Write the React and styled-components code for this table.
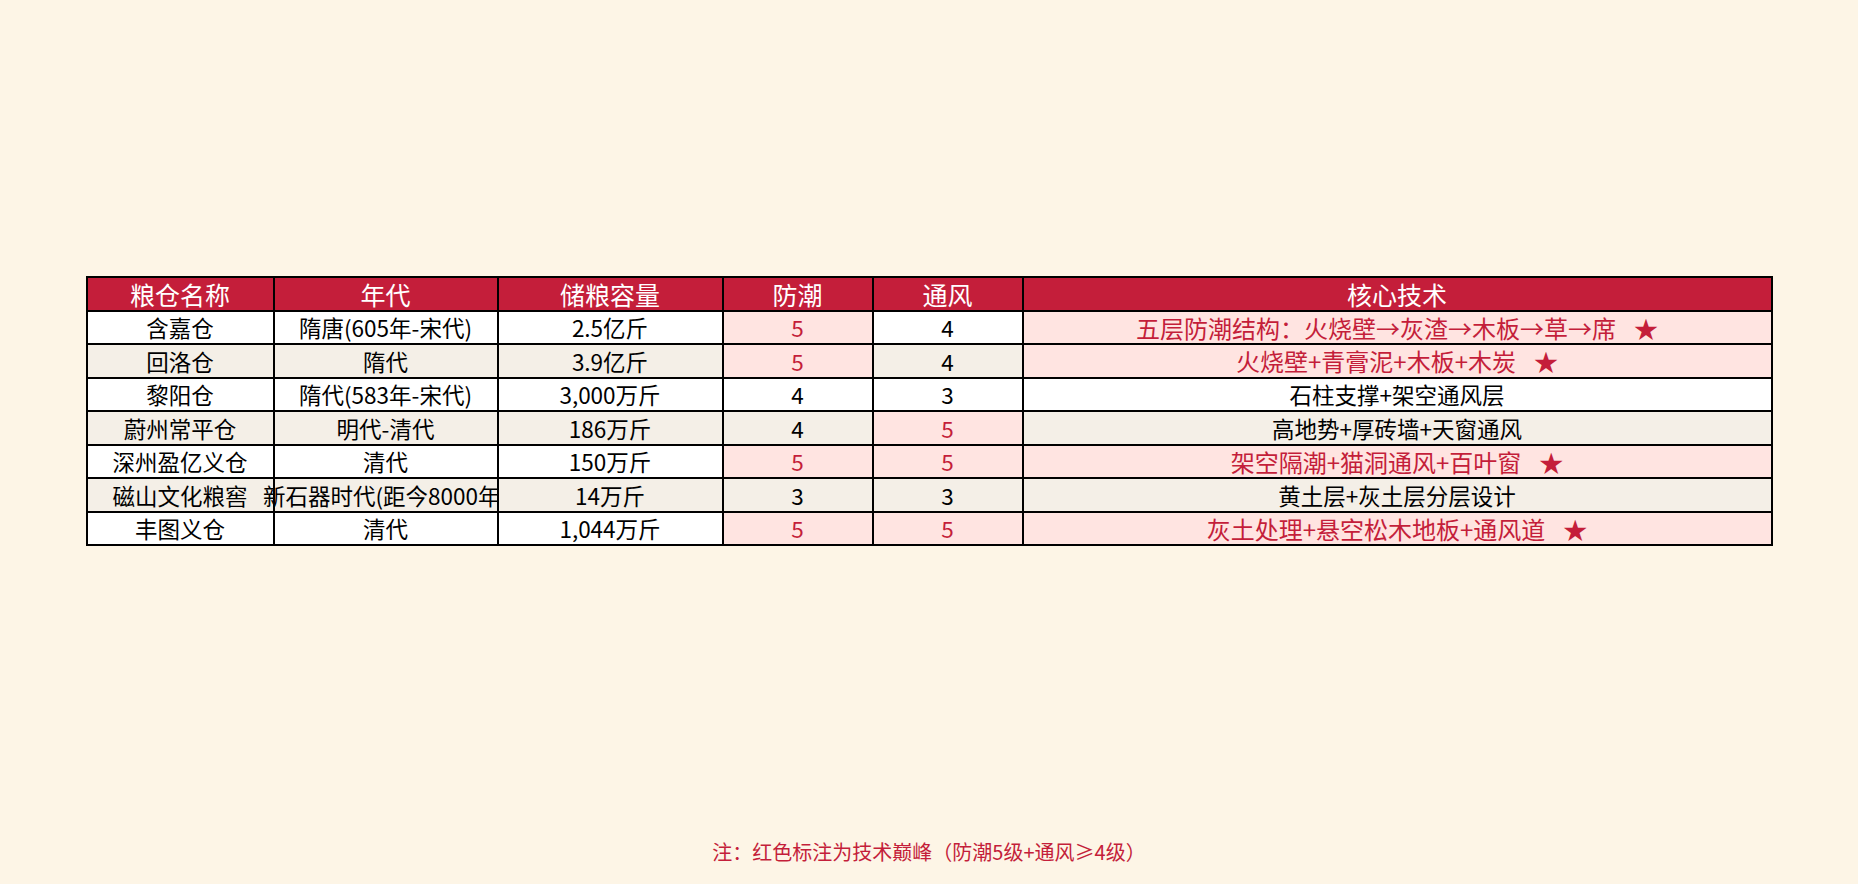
import React from "react";
import styled, { createGlobalStyle } from "styled-components";

const Global = createGlobalStyle`
  html, body { margin: 0; padding: 0; background: #fdf5e6; }
  body { font-family: "Noto Sans CJK SC", "Noto Sans", sans-serif; }
`;

const Page = styled.div`
  width: 1858px;
  height: 884px;
  display: flex;
  flex-direction: column;
  align-items: center;
  box-sizing: border-box;
  padding-top: 276px;
  padding-bottom: 22px;
`;

const Table = styled.div`
  display: grid;
  grid-template-columns: 185px 222px 223px 148px 148px 747px;
  grid-template-rows: 32px 31px 32px 31px 32px 31px 32px 31px;
  gap: 2px;
  padding: 2px;
  background: #000;
`;

const Cell = styled.div`
  position: relative;
  display: flex;
  align-items: center;
  justify-content: center;
  white-space: nowrap;
  font-size: ${(p) => (p.$head ? "25px" : p.$big ? "24px" : "22.5px")};
  line-height: 1;
  background: ${(p) =>
    p.$head ? "#c41e3a" : p.$hi ? "#ffe4e1" : p.$alt ? "#f4efe7" : "#ffffff"};
  color: ${(p) => (p.$head ? "#ffffff" : p.$red ? "#c41e3a" : "#000000")};
`;

const Star = styled.span`
  margin-left: 0.75em;
`;

const Note = styled.div`
  margin-top: auto;
  font-size: 20px;
  color: #c41e3a;
  line-height: 1;
`;

const heads = ["粮仓名称", "年代", "储粮容量", "防潮", "通风", "核心技术"];

const rows = [
  ["含嘉仓", "隋唐(605年-宋代)", "2.5亿斤", 5, 4, "五层防潮结构：火烧壁→灰渣→木板→草→席", true],
  ["回洛仓", "隋代", "3.9亿斤", 5, 4, "火烧壁+青膏泥+木板+木炭", true],
  ["黎阳仓", "隋代(583年-宋代)", "3,000万斤", 4, 3, "石柱支撑+架空通风层", false],
  ["蔚州常平仓", "明代-清代", "186万斤", 4, 5, "高地势+厚砖墙+天窗通风", false],
  ["深州盈亿义仓", "清代", "150万斤", 5, 5, "架空隔潮+猫洞通风+百叶窗", true],
  ["磁山文化粮窖", "新石器时代(距今8000年)", "14万斤", 3, 3, "黄土层+灰土层分层设计", false],
  ["丰图义仓", "清代", "1,044万斤", 5, 5, "灰土处理+悬空松木地板+通风道", true],
];

export default function App() {
  return (
    <>
      <Global />
      <Page>
        <Table>
          {heads.map((h) => (
            <Cell key={h} $head>
              {h}
            </Cell>
          ))}
          {rows.map(([name, era, cap, moist, air, tech, star], i) => {
            const alt = i % 2 === 1;
            return (
              <React.Fragment key={name}>
                <Cell $alt={alt}>{name}</Cell>
                <Cell $alt={alt}>{era}</Cell>
                <Cell $alt={alt}>{cap}</Cell>
                <Cell $alt={alt} $hi={moist === 5} $red={moist === 5}>
                  {moist}
                </Cell>
                <Cell $alt={alt} $hi={air === 5} $red={air === 5}>
                  {air}
                </Cell>
                <Cell $alt={alt} $hi={star} $red={star} $big={star}>
                  {tech}
                  {star && <Star>★</Star>}
                </Cell>
              </React.Fragment>
            );
          })}
        </Table>
        <Note>注：红色标注为技术巅峰（防潮5级+通风≥4级）</Note>
      </Page>
    </>
  );
}
